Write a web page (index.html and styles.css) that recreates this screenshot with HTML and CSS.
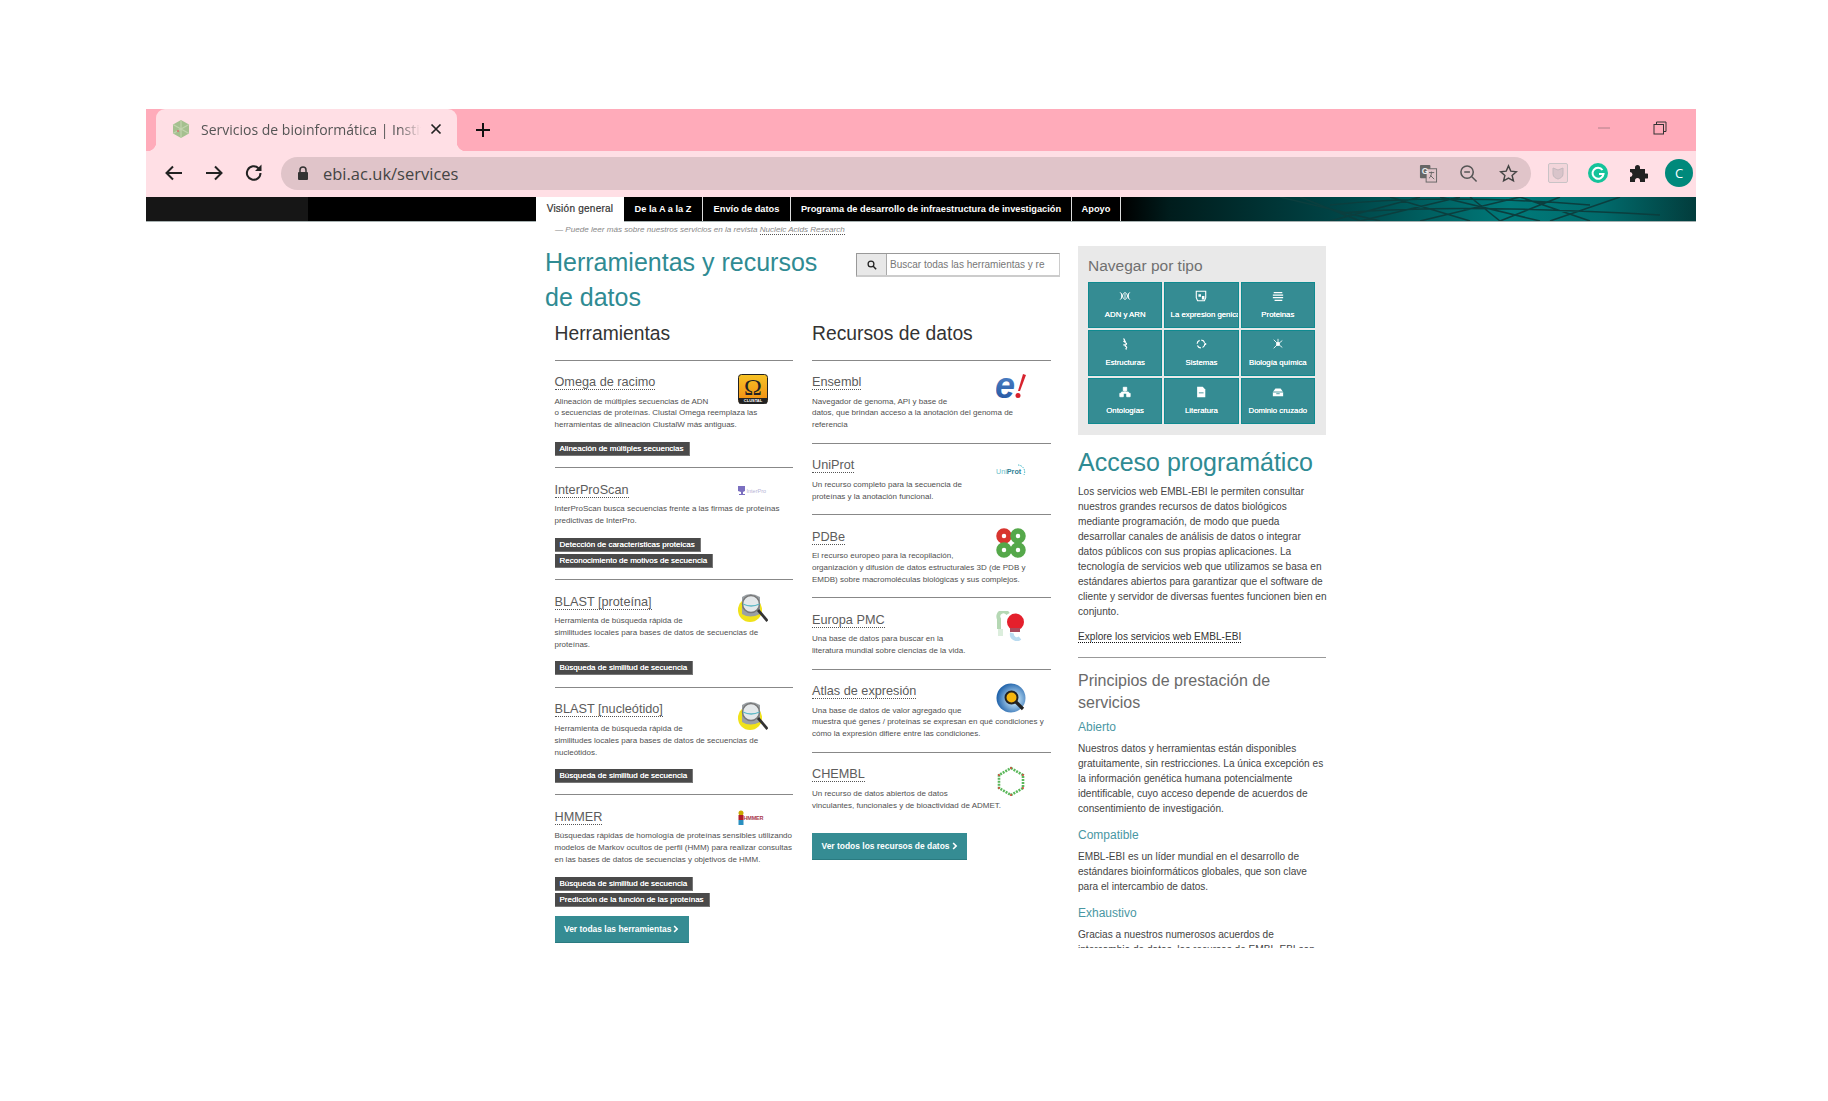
FILE: index.html
```html
<!DOCTYPE html>
<html lang="es">
<head>
<meta charset="utf-8">
<title>Servicios de bioinformática</title>
<link rel="stylesheet" href="styles.css">
</head>
<body>
<div class="window">
  <div class="tabstrip">
    <div class="tab">
      <svg class="favicon" viewBox="0 0 20 20"><polygon points="10,1 18,5.500 18,14.500 10,19 2,14.500 2,5.500" fill="#a5c08f"/><path d="M2 5.500L18 14.500M18 5.500L2 14.500M10 1V19" stroke="#c2d3ae" stroke-width="1.200"/><circle cx="7" cy="12" r="1" fill="#d86a6a"/></svg>
      <span class="tab-title">Servicios de bioinformática | Instituto</span>
      <svg class="tab-close" viewBox="0 0 12 12"><path d="M1.500 1.500L10.500 10.500M10.500 1.500L1.500 10.500" stroke="#222" stroke-width="1.700"/></svg>
    </div>
    <svg class="newtab" viewBox="0 0 16 16"><path d="M8 1V15M1 8H15" stroke="#111" stroke-width="2"/></svg>
    <div class="winctl">
      <svg class="win-min" viewBox="0 0 14 14"><path d="M1 7H13" stroke="#b0808a" stroke-width="1"/></svg>
      <svg class="win-max" viewBox="0 0 14 14"><path d="M3.500 3.500V1H13V10.500H10.500" fill="none" stroke="#333" stroke-width="1"/><rect x="1" y="3.500" width="9.500" height="9.500" fill="none" stroke="#333" stroke-width="1"/></svg>
    </div>
  </div>
  <div class="toolbar">
    <svg class="tb-btn" viewBox="0 0 20 20"><path d="M18 10H3M9 3.500L2.500 10L9 16.500" fill="none" stroke="#222" stroke-width="2"/></svg>
    <svg class="tb-btn" viewBox="0 0 20 20"><path d="M2 10H17M11 3.500L17.500 10L11 16.500" fill="none" stroke="#222" stroke-width="2"/></svg>
    <svg class="tb-btn" viewBox="0 0 20 20"><path d="M16.500 10A6.800 6.800 0 1 1 14.500 5.200" fill="none" stroke="#222" stroke-width="2"/><path d="M17.500 1.500V8H11Z" fill="#222"/></svg>
    <div class="omnibox">
      <svg class="lock" viewBox="0 0 12 14"><rect x="1" y="6" width="10" height="8" rx="1" fill="#333"/><path d="M3 6V4a3 3 0 0 1 6 0V6" fill="none" stroke="#333" stroke-width="1.500"/></svg>
      <span class="url">ebi.ac.uk/services</span>
      <svg class="omni-ic ic-translate" viewBox="0 0 20 20"><rect x="1" y="1" width="11" height="14" rx="1" fill="#666"/><rect x="7.500" y="5" width="11" height="14" fill="#e0c4c9" stroke="#666"/><text x="3" y="11" class="ic-g">G</text><path d="M10.500 9H16M13 8V9.500C13 12 12 14 10.500 15M12 12L16 16" stroke="#666" fill="none"/></svg>
      <svg class="omni-ic" viewBox="0 0 20 20"><circle cx="8.500" cy="8.500" r="6.500" fill="none" stroke="#555" stroke-width="1.600"/><path d="M5.500 8.500H11.500M13.500 13.500L18.500 18.500" stroke="#555" stroke-width="1.600"/></svg>
      <svg class="omni-ic" viewBox="0 0 20 20"><path d="M10 2L12.400 7.500L18.300 8.100L13.800 12L15.200 17.800L10 14.800L4.800 17.800L6.200 12L1.700 8.100L7.600 7.500Z" fill="none" stroke="#444" stroke-width="1.500"/></svg>
    </div>
    <div class="ext-row">
      <svg class="ext" viewBox="0 0 20 20"><rect x="0.500" y="0.500" width="19" height="19" rx="1.500" fill="#f2d5da" stroke="#c9c3c6"/><path d="M5 5L10 7L15 5V11C15 14 12 15.500 10 16C8 15.500 5 14 5 11Z" fill="#d9c4ca" stroke="#c4b8bd"/></svg>
      <svg class="ext" viewBox="0 0 20 20"><circle cx="10" cy="10" r="10" fill="#15c39a"/><path d="M14.500 7A5.500 5.500 0 1 0 15.500 11H11" fill="none" stroke="#fff" stroke-width="2"/></svg>
      <svg class="ext" viewBox="0 0 20 20"><path d="M2 6H7V4.500a2.500 2.500 0 0 1 5 0V6H17V10.500H18.500a2.500 2.500 0 0 1 0 5H17V19H12V17.500a2.500 2.500 0 0 0-5 0V19H2V14a2.500 2.500 0 0 0 0-5Z" fill="#222"/></svg>
      <span class="avatar">C</span>
    </div>
  </div>
  <div class="band">
    <div class="band-dark"></div>
    <nav class="tabs">
      <a class="navtab active">Visión general</a>
      <a class="navtab w-az">De la A a la Z</a>
      <a class="navtab w-env">Envío de datos</a>
      <a class="navtab w-prog">Programa de desarrollo de infraestructura de investigación</a>
      <a class="navtab w-apo">Apoyo</a>
    </nav>
    <svg class="band-art" viewBox="0 0 576 24" preserveAspectRatio="none">
      <g fill="none" stroke="#0b3e3e" stroke-width="1.500">
        <path d="M160 0L260 24M180 0L240 24M210 24L300 0M240 24L340 0M270 0L350 24M300 24L400 0M320 0L420 24M350 0L380 24M380 24L440 0M400 0L470 24M430 24L500 0M210 8Q320 -4 470 8M220 16Q340 6 540 18"/>
      </g>
    </svg>
  </div>
  <main class="page">
    <section class="left">
      <p class="quote">— Puede leer más sobre nuestros servicios en la revista <span class="dotted">Nucleic Acids Research</span></p>
      <header class="head">
        <h1 class="title">Herramientas y recursos de datos</h1>
        <div class="search">
          <span class="search-btn"><svg class="search-ic" viewBox="0 0 12 12"><circle cx="4.800" cy="4.800" r="3.500" fill="none" stroke="#222" stroke-width="1.500"/><path d="M7.500 7.500L11 11" stroke="#222" stroke-width="1.800"/></svg></span>
          <span class="search-input">Buscar todas las herramientas y re</span>
        </div>
      </header>
      <div class="cols">
        <div class="col">
          <h2 class="col-title">Herramientas</h2>
          <article class="item">
            <svg class="logo" viewBox="0 0 30 30"><defs><linearGradient id="cl" x1="0" y1="0" x2="0" y2="1"><stop offset="0" stop-color="#f7c325"/><stop offset="1" stop-color="#f08a12"/></linearGradient></defs><rect x="0.500" y="0.500" width="29" height="29" rx="3" fill="url(#cl)" stroke="#222"/><rect x="1" y="24" width="28" height="5.500" fill="#222"/><text x="15" y="21" class="omega">Ω</text><text x="15" y="28.300" class="clustal">CLUSTAL</text></svg>
            <h3 class="item-title"><span class="dotted">Omega de racimo</span></h3>
            <p class="desc">Alineación de múltiples secuencias de ADN<br>o secuencias de proteínas. Clustal Omega reemplaza las herramientas de alineación ClustalW más antiguas.</p>
            <div class="tags"><span class="tag">Alineación de múltiples secuencias</span></div>
          </article>
          <article class="item">
            <svg class="logo logo-short" viewBox="0 0 30 18"><path d="M0 3H7V8L5 9V11H7V12H1V11H3V9L0 8Z" fill="#7b6fc0"/><text x="8.500" y="10" class="ipro">InterPro</text></svg>
            <h3 class="item-title"><span class="dotted">InterProScan</span></h3>
            <p class="desc">InterProScan busca secuencias frente a las firmas de proteínas predictivas de InterPro.</p>
            <div class="tags"><span class="tag">Detección de características proteicas</span><span class="tag">Reconocimiento de motivos de secuencia</span></div>
          </article>
          <article class="item">
            <svg class="logo" viewBox="0 0 30 30"><use href="#blast"/></svg>
            <h3 class="item-title"><span class="dotted">BLAST [proteína]</span></h3>
            <p class="desc">Herramienta de búsqueda rápida de<br>similitudes locales para bases de datos de secuencias de proteínas.</p>
            <div class="tags"><span class="tag">Búsqueda de similitud de secuencia</span></div>
          </article>
          <article class="item">
            <svg class="logo" viewBox="0 0 30 30"><use href="#blast"/></svg>
            <h3 class="item-title"><span class="dotted">BLAST [nucleótido]</span></h3>
            <p class="desc">Herramienta de búsqueda rápida de<br>similitudes locales para bases de datos de secuencias de nucleótidos.</p>
            <div class="tags"><span class="tag">Búsqueda de similitud de secuencia</span></div>
          </article>
          <article class="item">
            <svg class="logo logo-short" viewBox="0 0 30 18"><circle cx="3" cy="3" r="2.500" fill="#c9a800"/><rect x="0.500" y="5" width="5" height="5" fill="#b01d2a"/><rect x="0.500" y="10" width="5" height="5" fill="#2a8fc0"/><text x="5.500" y="10" class="hmm">HMMER</text></svg>
            <h3 class="item-title"><span class="dotted">HMMER</span></h3>
            <p class="desc">Búsquedas rápidas de homología de proteínas sensibles utilizando modelos de Markov ocultos de perfil (HMM) para realizar consultas en las bases de datos de secuencias y objetivos de HMM.</p>
            <div class="tags"><span class="tag">Búsqueda de similitud de secuencia</span><span class="tag">Predicción de la función de las proteínas</span></div>
          </article>
          <a class="more">Ver todas las herramientas <svg class="chev" viewBox="0 0 8 10"><path d="M1.500 1L5.500 5L1.500 9" fill="none" stroke="#fff" stroke-width="2.200"/></svg></a>
        </div>
        <div class="col">
          <h2 class="col-title">Recursos de datos</h2>
          <article class="item">
            <svg class="logo" viewBox="0 0 30 30"><defs><linearGradient id="ens" x1="0" y1="0" x2="0" y2="1"><stop offset="0" stop-color="#5a8fd0"/><stop offset="1" stop-color="#1e4f9c"/></linearGradient></defs><text x="-1" y="24" class="ens-e">e</text><path d="M22 17L27 0L30 1L24 17Z" fill="#d7232e"/><circle cx="22" cy="21.500" r="2.500" fill="#d7232e"/></svg>
            <h3 class="item-title"><span class="dotted">Ensembl</span></h3>
            <p class="desc">Navegador de genoma, API y base de<br>datos, que brindan acceso a la anotación del genoma de referencia</p>
          </article>
          <article class="item">
            <svg class="logo" viewBox="0 0 30 30"><text x="0" y="17" class="uni">Uni<tspan class="uni-b">Prot</tspan></text><path d="M22 8A7 7 0 0 1 28 18" fill="none" stroke="#39b4c4" stroke-width="1" stroke-dasharray="1.500 1"/></svg>
            <h3 class="item-title"><span class="dotted">UniProt</span></h3>
            <p class="desc">Un recurso completo para la secuencia de<br>proteínas y la anotación funcional.</p>
          </article>
          <article class="item">
            <svg class="logo" viewBox="0 0 30 30"><g fill="none" stroke-width="5.500"><circle cx="8" cy="8" r="5" stroke="#d8352f"/><circle cx="22" cy="8" r="5" stroke="#55a84a"/><circle cx="8" cy="22" r="5" stroke="#55a84a"/><circle cx="22" cy="22" r="5" stroke="#55a84a"/></g></svg>
            <h3 class="item-title"><span class="dotted">PDBe</span></h3>
            <p class="desc">El recurso europeo para la recopilación,<br>organización y difusión de datos estructurales 3D (de PDB y EMDB) sobre macromoléculas biológicas y sus complejos.</p>
          </article>
          <article class="item">
            <svg class="logo" viewBox="0 0 30 30"><path d="M3 18V8A5 5 0 0 1 12 3" fill="none" stroke="#b5d8b4" stroke-width="4"/><path d="M16 22A5 5 0 0 0 24 27" fill="none" stroke="#b9dbf0" stroke-width="4"/><rect x="2" y="18" width="5" height="7" fill="#dceedd"/><circle cx="19.500" cy="11" r="8.500" fill="#e4202c"/><rect x="14" y="17" width="10" height="4" fill="#a94a5c"/></svg>
            <h3 class="item-title"><span class="dotted">Europa PMC</span></h3>
            <p class="desc">Una base de datos para buscar en la<br>literatura mundial sobre ciencias de la vida.</p>
          </article>
          <article class="item">
            <svg class="logo" viewBox="0 0 30 30"><defs><radialGradient id="atl" cx="0.600" cy="0.550" r="0.600"><stop offset="0.300" stop-color="#a9d0ee"/><stop offset="1" stop-color="#1c5fa8"/></radialGradient></defs><circle cx="15" cy="15" r="14.500" fill="url(#atl)"/><circle cx="15.500" cy="14.500" r="6" fill="#f5b60f" stroke="#222" stroke-width="2"/><path d="M20 19L27 26" stroke="#222" stroke-width="3.200"/></svg>
            <h3 class="item-title"><span class="dotted">Atlas de expresión</span></h3>
            <p class="desc">Una base de datos de valor agregado que<br>muestra qué genes / proteínas se expresan en qué condiciones y cómo la expresión difiere entre las condiciones.</p>
          </article>
          <article class="item">
            <svg class="logo" viewBox="0 0 30 30"><polygon points="15,2 27,9 27,22 15,29 3,22 3,9" fill="none" stroke="#5bb85b" stroke-width="2.600" stroke-dasharray="2 1"/><g fill="#d9403a"><circle cx="15" cy="2" r="1"/><circle cx="27" cy="9" r="1"/><circle cx="27" cy="22" r="1"/><circle cx="15" cy="29" r="1"/><circle cx="3" cy="22" r="1"/><circle cx="3" cy="9" r="1"/></g></svg>
            <h3 class="item-title"><span class="dotted">CHEMBL</span></h3>
            <p class="desc">Un recurso de datos abiertos de datos<br>vinculantes, funcionales y de bioactividad de ADMET.</p>
          </article>
          <a class="more more-data">Ver todos los recursos de datos <svg class="chev" viewBox="0 0 8 10"><path d="M1.500 1L5.500 5L1.500 9" fill="none" stroke="#fff" stroke-width="2.200"/></svg></a>
        </div>
      </div>
    </section>
    <aside class="side">
      <div class="browse">
        <h2 class="browse-title">Navegar por tipo</h2>
        <div class="browse-grid">
          <a class="cell"><svg class="cell-ic" viewBox="0 0 14 10"><path d="M1 1C4 1 4 9 7 9S10 1 13 1M1 9C4 9 4 1 7 1S10 9 13 9M3 2V8M7 2V8M11 2V8" fill="none" stroke="#fff"/></svg><span>ADN y ARN</span></a>
          <a class="cell"><svg class="cell-ic" viewBox="0 0 14 14"><path d="M1.500 1.500H12.500V9L11 12.500H3L1.500 9Z" fill="none" stroke="#fff" stroke-width="1.300"/><path d="M4 5H7V8H4ZM8 7H11V11H8Z" fill="#fff"/></svg><span class="cell-shift">La expresion genica</span></a>
          <a class="cell"><svg class="cell-ic" viewBox="0 0 14 12"><path d="M2 2H12M1 5H13M1 8H13M3 11H12" stroke="#fff" stroke-width="1.400"/></svg><span>Proteinas</span></a>
          <a class="cell"><svg class="cell-ic" viewBox="0 0 14 14"><path d="M5 1C8 1 5 5 8 6S5 9 8 10S6 13 9 13M5 4H8M5 8H8" fill="none" stroke="#fff" stroke-width="1.300"/></svg><span>Estructuras</span></a>
          <a class="cell"><svg class="cell-ic" viewBox="0 0 14 14"><circle cx="7" cy="7" r="4.500" fill="none" stroke="#fff" stroke-width="1.400" stroke-dasharray="5 2"/><circle cx="12" cy="7" r="1.300" fill="#fff"/></svg><span>Sistemas</span></a>
          <a class="cell"><svg class="cell-ic" viewBox="0 0 14 14"><circle cx="7" cy="7" r="2.300" fill="#fff"/><path d="M7 7L2 2M7 7L12 3M7 7L2 12M7 7L12 11M7 7V1" stroke="#fff"/></svg><span>Biología química</span></a>
          <a class="cell"><svg class="cell-ic" viewBox="0 0 14 14"><path d="M5 1.500H9V5.500H5ZM1 8.500H5V12.500H1ZM9 8.500H13V12.500H9ZM7 5V7M3 9V7H11V9" fill="#fff" stroke="#fff"/></svg><span>Ontologías</span></a>
          <a class="cell"><svg class="cell-ic" viewBox="0 0 14 14"><path d="M2.500 1H9L12 4V13H2.500Z" fill="#fff"/><path d="M4.500 8H10" stroke="#358c93"/></svg><span>Literatura</span></a>
          <a class="cell"><svg class="cell-ic" viewBox="0 0 14 12"><path d="M1 11V6L4 2H10L13 6V11Z" fill="#fff"/><path d="M1 6H13M5 8H9" stroke="#358c93"/></svg><span>Dominio cruzado</span></a>
        </div>
      </div>
      <h2 class="side-title">Acceso programático</h2>
      <p class="side-text">Los servicios web EMBL-EBI le permiten consultar nuestros grandes recursos de datos biológicos mediante programación, de modo que pueda desarrollar canales de análisis de datos o integrar datos públicos con sus propias aplicaciones. La tecnología de servicios web que utilizamos se basa en estándares abiertos para garantizar que el software de cliente y servidor de diversas fuentes funcionen bien en conjunto.</p>
      <p class="side-link"><span class="dotted-dark">Explore los servicios web EMBL-EBI</span></p>
      <hr class="side-rule">
      <h3 class="side-sub">Principios de prestación de servicios</h3>
      <h4 class="side-h4 first">Abierto</h4>
      <p class="side-text">Nuestros datos y herramientas están disponibles gratuitamente, sin restricciones. La única excepción es la información genética humana potencialmente identificable, cuyo acceso depende de acuerdos de consentimiento de investigación.</p>
      <h4 class="side-h4">Compatible</h4>
      <p class="side-text">EMBL-EBI es un líder mundial en el desarrollo de estándares bioinformáticos globales, que son clave para el intercambio de datos.</p>
      <h4 class="side-h4">Exhaustivo</h4>
      <p class="side-text">Gracias a nuestros numerosos acuerdos de intercambio de datos, los recursos de EMBL-EBI son</p>
    </aside>
  </main>
</div>
<svg class="defs" width="0" height="0"><defs><g id="blast"><circle cx="12" cy="17" r="12" fill="#f0e21a"/><path d="M4 4Q12 -2 22 4V21Q12 26 4 21Z" fill="#9aa0a4"/><circle cx="13" cy="11" r="8.500" fill="#e4e8ea" stroke="#777" stroke-width="1.500"/><path d="M5 11Q13 15 21.500 11" fill="none" stroke="#5cb7c4" stroke-width="1.300"/><path d="M20 17L29.500 28" stroke="#333" stroke-width="2.800"/></g></defs></svg>
</body>
</html>
```

FILE: styles.css
```css
* { box-sizing: border-box; }
html, body { margin: 0; padding: 0; background: #fff; }
body { font-family: "Liberation Sans", Arial, sans-serif; color: #333; height: 1101px; overflow: hidden; }
h1, h2, h3, h4, p { margin: 0; font-weight: 400; }
.defs { display: block; }

.window { margin: 109px 0 0 146px; width: 1550px; }

.tabstrip { height: 42px; background: #ffabba; display: flex; align-items: flex-end; padding-left: 10px; }
.tab { position: relative; width: 301px; height: 42px; background: #ffdfe5; border-radius: 9px 9px 0 0; display: flex; align-items: center; padding: 0 14px 2px 15px; }
.tab::before, .tab::after { content: ""; position: absolute; bottom: 0; width: 9px; height: 9px; }
.tab::before { left: -9px; background: radial-gradient(circle at 0 0, #ffabba 9px, #ffdfe5 9.500px); }
.tab::after { right: -9px; background: radial-gradient(circle at 100% 0, #ffabba 9px, #ffdfe5 9.500px); }
.favicon { width: 20px; height: 20px; flex: none; }
.tab-title { margin-left: 10px; width: 220px; flex: none; font: 14px "Open Sans", sans-serif; color: #555; white-space: nowrap; overflow: hidden; -webkit-mask-image: linear-gradient(90deg, #000 90%, transparent); mask-image: linear-gradient(90deg, #000 90%, transparent); }
.tab-close { width: 12px; height: 12px; margin-left: 9px; flex: none; }
.newtab { width: 16px; height: 16px; margin: 0 0 13px 18px; flex: none; }
.winctl { margin-left: auto; align-self: flex-start; display: flex; gap: 42px; padding: 12px 29px 0 0; }
.win-min, .win-max { width: 14px; height: 14px; display: block; }

.toolbar { height: 46px; background: #ffdfe5; display: flex; align-items: center; padding: 0 8px 2px 18px; }
.tb-btn { width: 20px; height: 20px; margin-right: 20px; flex: none; }
.tb-btn:nth-child(3) { margin-right: 17px; }
.omnibox { width: 1250px; height: 33px; background: #e0c4c9; border-radius: 17px; display: flex; align-items: center; padding: 0 13px 0 16px; flex: none; }
.lock { width: 12px; height: 14px; flex: none; }
.url { margin-left: 14px; font: 16.500px "Open Sans", sans-serif; color: #444; }
.omni-ic { width: 19px; height: 19px; margin-left: 21px; flex: none; }
.ic-translate { margin-left: auto; }
.ic-g { font: 700 9px "Liberation Sans", sans-serif; fill: #eee; }
.ext-row { display: flex; align-items: center; margin-left: 17px; }
.ext { width: 20px; height: 20px; margin-right: 20px; flex: none; }
.ext:nth-child(3) { margin-right: 19px; }
.avatar { width: 28px; height: 28px; border-radius: 50%; background: #00897b; color: #fff; font: 13px "Open Sans", sans-serif; display: flex; align-items: center; justify-content: center; margin-left: -2px; flex: none; }

.band { height: 25px; background: linear-gradient(90deg, #000 0, #000 63%, #001c1c 66%, #00484a 78%, #007a7a 88%, #016a6b 94%, #023c3c 100%); border-bottom: 1px solid #a7b1b1; display: flex; position: relative; }
.band-dark { width: 162px; background: #161616; flex: none; }
.tabs { display: flex; margin-left: 228px; height: 24px; position: relative; z-index: 1; }
.navtab { display: flex; align-items: center; justify-content: center; color: #fff; font-size: 9.250px; font-weight: 700; border-right: 1px solid #ddd; white-space: nowrap; background: #000; padding-bottom: 1px; }
.active { width: 88px; background: #fff; color: #333; font-weight: 400; font-size: 10px; letter-spacing: 0.250px; -webkit-text-stroke: 0.200px #333; height: 25px; border: 0; padding-bottom: 2px; }
.w-az { width: 79px; }
.w-env { width: 88px; }
.w-prog { width: 281px; }
.w-apo { width: 49px; }
.band-art { position: absolute; right: 0; top: 0; width: 576px; height: 24px; }

.page { display: flex; margin-left: 390px; height: 726px; overflow: hidden; }
.left { width: 524px; flex: none; }
.quote { font-size: 8.100px; font-style: italic; line-height: 12px; color: #888; padding: 2px 0 0 19px; }
.dotted { border-bottom: 1px dotted #555; }
.dotted-dark { border-bottom: 1px dotted #111; }
.head { display: flex; justify-content: space-between; align-items: flex-start; padding-left: 9px; margin-top: 7px; }
.title { width: 290px; font-size: 25px; line-height: 34.500px; color: #2f8b93; margin-top: 2px; }
.search { width: 204px; height: 24px; display: flex; border: 1px solid #999; border-bottom-width: 2px; border-right-color: #ccc; border-bottom-color: #ccc; margin-top: 10px; }
.search-btn { width: 30px; background: #e8e8e8; border-right: 1px solid #aaa; display: flex; align-items: center; justify-content: center; flex: none; }
.search-ic { width: 10px; height: 10px; }
.search-input { padding: 0 14px 0 3px; width: 172px; font-size: 10px; line-height: 21px; color: #777; white-space: nowrap; overflow: hidden; }

.cols { display: flex; gap: 19px; padding-left: 18.500px; margin-top: 7.500px; }
.col { width: 238.500px; flex: none; }
.col-title { font-size: 19.300px; line-height: 24px; color: #333; margin-bottom: 14px; }
.item { border-top: 1px solid #888; padding: 13px 0 11.500px; }
.item::after { content: ""; display: block; clear: both; }
.logo { float: right; width: 30px; height: 30px; margin: 0 25px 0 0; }
.logo-short { height: 18px; margin-top: 2px; }
.item-title { font-size: 12.700px; line-height: 16px; color: #5c5c5c; margin-top: 0.500px; }
.desc { font-size: 8px; line-height: 11.900px; color: #505050; margin-top: 5.500px; }
.tags { margin-top: 10.500px; display: flex; flex-direction: column; align-items: flex-start; gap: 2px; }
.tag { height: 14px; line-height: 13px; font-size: 8px; color: #fff; background: #4a4a4a; border: 1px solid #777; border-width: 0 1px 1px 0; padding: 0 5px; white-space: nowrap; text-shadow: 0 0 0.400px #fff; }
.col > .item:nth-last-child(2) { padding-bottom: 9px; }
.more { display: inline-flex; align-items: center; gap: 2px; height: 27px; background: #358c93; border-bottom: 1px solid #2a7a80; color: #fff; font-size: 8.450px; font-weight: 700; padding: 0 9.500px; white-space: nowrap; }
.chev { width: 6px; height: 8px; }
.more-data { margin-top: 12px; }

.omega { font: 400 24px "Liberation Serif", serif; fill: #222; text-anchor: middle; }
.clustal { font: 700 4px "Liberation Sans", sans-serif; fill: #fff; text-anchor: middle; }
.ipro { font: 5.500px "Liberation Sans", sans-serif; fill: #b7b4d6; }
.hmm { font: 700 5.500px "Liberation Sans", sans-serif; fill: #a83b4e; letter-spacing: -0.200px; }
.ens-e { font: italic 700 36px "Liberation Sans", sans-serif; fill: url(#ens); }
.uni { font: 7.200px "Liberation Sans", sans-serif; fill: #6cbfcb; }
.uni-b { font-weight: 700; fill: #2c7f95; }

.side { width: 248px; margin-left: 18px; flex: none; padding-top: 24px; }
.browse { background: #e9e9e9; height: 189px; padding: 9px 10px 0; }
.browse-title { font-size: 15.500px; line-height: 22px; color: #707070; margin-bottom: 5px; }
.browse-grid { display: grid; grid-template-columns: repeat(3, 1fr); grid-template-rows: repeat(3, 46px); gap: 2px; width: 227px; }
.cell { background: #358c93; color: #fff; border: 1px solid #0f8a90; display: flex; flex-direction: column; align-items: center; overflow: hidden; padding-top: 7px; font-size: 7.800px; white-space: nowrap; text-shadow: 0 0 0.400px #fff; }
.cell span { margin-top: 8px; line-height: 10px; }
.cell .cell-shift { margin-left: 8px; }
.cell-ic { width: 12px; height: 12px; flex: none; }
.side-title { font-size: 25px; line-height: 30px; color: #2f8b93; margin-top: 12px; }
.side-text { font-size: 10.100px; line-height: 15px; color: #444; margin-right: -2px; }
.side-title + .side-text { margin-top: 7px; }
.side-link { font-size: 10.100px; line-height: 15px; color: #333; margin-top: 10px; }
.side-rule { border: 0; border-top: 1px solid #999; margin: 13px 0 12px; }
.side-sub { font-size: 16px; line-height: 21.500px; color: #6a6a6a; }
.side-h4 { font-size: 12px; line-height: 15px; color: #4a97a3; margin: 12px 0 6px; }
.side-h4.first { margin-top: 7px; }
```
